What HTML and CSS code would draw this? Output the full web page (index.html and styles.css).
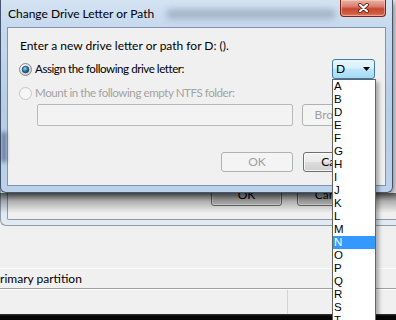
FILE: index.html
```html
<!DOCTYPE html>
<html>
<head>
<meta charset="utf-8">
<title>Change Drive Letter or Path</title>
<link rel="stylesheet" href="styles.css">
</head>
<body>
<div class="screen">
  <div class="back-dialog">
    <div class="back-client">
      <div class="back-btns">
        <div class="btn">OK</div>
        <div class="btn">Cancel</div>
      </div>
    </div>
  </div>
  <div class="disk">
    <div class="disk-gap"></div>
    <div class="disk-row"><span class="clip">Primary partition</span></div>
    <div class="disk-cols"><div class="col1"></div><div class="col2"></div></div>
    <div class="taskbar"></div>
  </div>

  <div class="shadow"></div>

  <div class="dialog">
    <div class="glass-blur"></div>
    <div class="glass-blur2"></div>
    <div class="titlebar">
      <span class="title">Change Drive Letter or Path</span>
      <div class="close">
        <svg width="11" height="10" viewBox="0 0 11 10"><path d="M2 1.8 L9 8.2 M9 1.8 L2 8.2" stroke="#5b1b10" stroke-width="3.8" stroke-linecap="round"/><path d="M2 1.8 L9 8.2 M9 1.8 L2 8.2" stroke="#ffffff" stroke-width="2.2" stroke-linecap="round"/></svg>
      </div>
    </div>
    <div class="client">
      <div class="prompt">Enter a new drive letter or path for D: ().</div>
      <div class="row1">
        <div class="radio-line">
          <svg class="radio" width="13" height="13" viewBox="0 0 13 13">
            <defs>
              <radialGradient id="ring" cx="35%" cy="30%" r="75%"><stop offset="0" stop-color="#ffffff"/><stop offset="1" stop-color="#c9c9c9"/></radialGradient>
              <radialGradient id="dot" cx="40%" cy="35%" r="70%"><stop offset="0" stop-color="#8fd8f8"/><stop offset=".55" stop-color="#2b7fb6"/><stop offset="1" stop-color="#0c3a5a"/></radialGradient>
            </defs>
            <circle cx="6.5" cy="6.5" r="6" fill="url(#ring)" stroke="#8b8b8b"/>
            <circle cx="6.5" cy="6.5" r="3.3" fill="url(#dot)" stroke="#163f5c" stroke-width=".8"/>
          </svg>
          <span>Assign the following drive letter:</span>
        </div>
        <div class="combo"><span>D</span><svg width="7" height="4" viewBox="0 0 7 4"><path d="M0 0H7L3.5 4Z" fill="#000"/></svg></div>
      </div>
      <div class="row2 disabled">
        <svg class="radio" width="13" height="13" viewBox="0 0 13 13"><circle cx="6.5" cy="6.5" r="6" fill="#f6f6f6" stroke="#c6c6c6"/></svg>
        <span>Mount in the following empty NTFS folder:</span>
      </div>
      <div class="row3">
        <div class="textbox"></div>
        <div class="btn disabled browse">Browse...</div>
      </div>
      <div class="btn-row">
        <div class="btn disabled">OK</div>
        <div class="btn">Cancel</div>
      </div>
    </div>
  </div>

  <ul class="droplist">
    <li>A</li><li>B</li><li>D</li><li>E</li><li>F</li><li>G</li><li>H</li><li>I</li><li>J</li><li>K</li><li>L</li><li>M</li><li class="sel">N</li><li>O</li><li>P</li><li>Q</li><li>R</li><li>S</li><li>T</li><li>U</li>
  </ul>
</div>
</body>
</html>
```

FILE: styles.css
```css
* { box-sizing: border-box; }
html, body { margin: 0; padding: 0; }
body {
  width: 396px; height: 320px; overflow: hidden;
  background: #f0f0f0;
  font-family: Lato, "Noto Sans", sans-serif;
  font-size: 12px; color: #000;
}
.screen { position: relative; width: 396px; height: 320px; overflow: hidden; background: #f0f0f0; }

/* underlying dialog */
.back-dialog {
  width: 410px; height: 226px; display: flex;
  background: linear-gradient(180deg, #c9d8e8 0, #dbe5f0 200px, #e3eaf2 226px);
  border: 1px solid #8f9aa6; border-top: none; border-right: none;
  border-radius: 0 0 0 6px;
  padding: 0 0 5px 6px;
}
.back-client {
  flex: 1; background: #f0f0f0;
  border: 1px solid #8d99a8; border-top: none; border-right: none;
  border-radius: 0 0 0 2px;
  display: flex; flex-direction: column; justify-content: flex-end;
  padding: 0 0 13px 203px;
}
.back-btns { display: flex; gap: 15px; }
.back-btns .btn { width: 71px; height: 22px; }

/* disk management area */
.disk { display: flex; flex-direction: column; height: 94px; }
.disk-gap { height: 42px; }
.disk-row {
  height: 21px; border-top: 1px solid #fbfbfb; border-bottom: 1px solid #a0a0a0;
  line-height: 19px; white-space: nowrap; overflow: hidden;
}
.clip { display: inline-block; margin-left: -7px; }
.disk-cols { flex: 1; display: grid; grid-template-columns: 288px 1fr; border-top: 1px solid #fdfdfd; }
.col1 { border-right: 1px solid #d4d4d4; }
.taskbar { height: 6px; background: linear-gradient(#3a3a3a, #050505 2px); }

.shadow {
  position: absolute; left: 0; top: 193px; width: 396px; height: 20px;
  background: linear-gradient(180deg, rgba(0,0,0,.6), rgba(0,0,0,.28) 40%, rgba(0,0,0,0));
}

/* top dialog */
.dialog {
  position: absolute; left: 0; top: 0; width: 393px; height: 193px;
  display: flex; flex-direction: column;
  padding: 0 6px 6px 6px;
  border: 1px solid rgba(25,40,65,.75); border-top: none;
  border-radius: 0 0 6px 6px;
  background: linear-gradient(180deg, #d4e3f3 0, #c6d9ee 27px, #b6cde8 110px, #bcd2ea 193px);
  box-shadow: 2px 2px 6px rgba(0,0,0,.45);
}
.glass-blur {
  position: absolute; left: 165px; top: 9px; width: 170px; height: 10px;
  background: rgba(70,85,110,.3); filter: blur(3px); border-radius: 5px;
}
.glass-blur2 {
  position: absolute; left: 1px; top: 132px; width: 4px; height: 30px;
  background: rgba(20,30,70,.6); filter: blur(2px);
}
.titlebar { height: 27px; display: flex; align-items: flex-start; position: relative; }
.title { margin: 6px 0 0 1px; line-height: 15px; font-size: 12px; color: #000; }
.close {
  margin-left: auto; width: 46px; height: 17px;
  display: flex; align-items: center; justify-content: center;
  border: 1px solid #7c2517; border-top: none; border-radius: 0 0 4px 4px;
  background: linear-gradient(180deg, #eab3a5 0, #d9806f 40%, #c44a33 55%, #d45b40 85%, #e0836c 100%);
  box-shadow: inset 0 0 0 1px rgba(255,220,210,.45);
}

.client {
  flex: 1; background: #f0f0f0;
  border: 1px solid #7e93ad;
  display: flex; flex-direction: column;
  padding: 11px 10px 0 11px;
}
.prompt { line-height: 14px; padding-left: 1px; }
.row1 { margin-top: 6px; height: 20px; display: flex; align-items: center; justify-content: space-between; }
.radio-line { display: flex; align-items: center; }
.radio { flex: none; display: block; }
.radio-line span, .row2 span { margin-left: 3px; line-height: 14px; font-size: 11.6px; letter-spacing: -0.45px; }
.combo {
  width: 43px; height: 20px; display: flex; align-items: center; justify-content: space-between;
  padding: 0 4px 0 3px;
  border: 1px solid #3d7bad; border-radius: 3px;
  background: linear-gradient(180deg, #eaf6fd 0, #d9f0fc 45%, #bee6fd 50%, #a7d9f5 100%);
  line-height: 14px;
}
.row2 { margin-top: 7px; height: 14px; display: flex; align-items: center; }
.disabled { color: #a3a3a3; }
.row3 { margin-top: 4px; height: 22px; display: flex; gap: 9px; padding-left: 18px; }
.textbox { flex: 1; border: 1px solid #b9b9b9; border-radius: 2px; background: #f3f3f3; }
.browse { width: 73px; height: 22px; }
.btn-row { margin-top: 26px; display: flex; justify-content: flex-end; gap: 10px; }
.btn-row .btn { width: 72px; height: 20px; }

.btn {
  display: flex; align-items: center; justify-content: center;
  border: 1px solid #707070; border-radius: 3px;
  background: linear-gradient(180deg, #f2f2f2 0, #ebebeb 48%, #dddddd 52%, #cfcfcf 100%);
  box-shadow: inset 0 0 0 1px rgba(255,255,255,.75);
  line-height: 14px; color: #000;
}
.btn.disabled {
  border-color: #adb2b5; background: #f4f4f4; box-shadow: none; color: #a0a0a0;
}

.droplist {
  position: absolute; left: 332px; top: 79px; width: 44px; height: 260px;
  margin: 0; padding: 0; list-style: none;
  background: #fff; border: 1px solid #646464;
  box-shadow: 3px 3px 4px rgba(0,0,0,.3);
  font-family: "Liberation Sans", Arial, sans-serif; font-size: 11.5px;
}
.droplist li { height: 13px; line-height: 13px; padding-left: 1px; }
.droplist li.sel { background: #3399ff; color: #fff; }
```
